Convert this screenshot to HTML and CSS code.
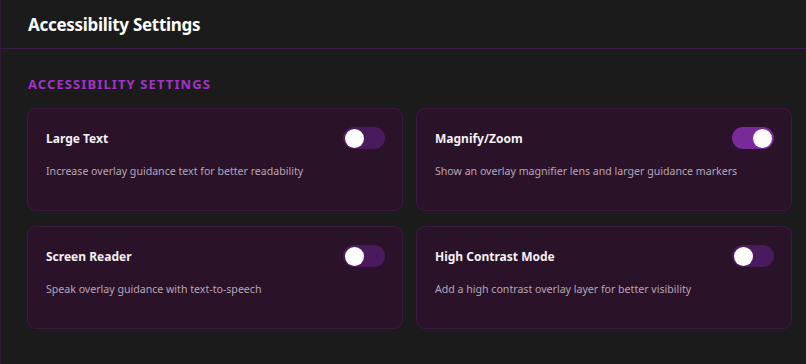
FILE: index.html
```html
<!DOCTYPE html>
<html lang="en">
<head>
  <meta charset="UTF-8" />
  <title>Accessibility Settings</title>
  <link rel="stylesheet" href="styles.css">
</head>
<body>
  <div class="panel">
    <header class="panel-header">
      <h1>Accessibility Settings</h1>
    </header>

    <section class="panel-body">
      <h2 class="section-title">Accessibility Settings</h2>

      <div class="settings-grid">
        <div class="setting-card">
          <div class="setting-top">
            <span class="setting-name">Large Text</span>
            <span class="toggle"><span class="knob"></span></span>
          </div>
          <p class="setting-desc">Increase overlay guidance text for better readability</p>
        </div>

        <div class="setting-card">
          <div class="setting-top">
            <span class="setting-name">Magnify/Zoom</span>
            <span class="toggle on"><span class="knob"></span></span>
          </div>
          <p class="setting-desc">Show an overlay magnifier lens and larger guidance markers</p>
        </div>

        <div class="setting-card">
          <div class="setting-top">
            <span class="setting-name">Screen Reader</span>
            <span class="toggle"><span class="knob"></span></span>
          </div>
          <p class="setting-desc">Speak overlay guidance with text-to-speech</p>
        </div>

        <div class="setting-card">
          <div class="setting-top">
            <span class="setting-name">High Contrast Mode</span>
            <span class="toggle"><span class="knob"></span></span>
          </div>
          <p class="setting-desc">Add a high contrast overlay layer for better visibility</p>
        </div>
      </div>
    </section>
  </div>
</body>
</html>
```

FILE: styles.css
```css
html, body {
  margin: 0;
  height: 100%;
}

body {
  background: #1c1b1c;
  font-family: "Noto Sans", "Open Sans", sans-serif;
  color: #fff;
}

.panel {
  height: 100%;
  border-left: 1px solid #2b1c31;
}

.panel-header {
  height: 48px;
  border-bottom: 1px solid #3a1d44;
  padding: 0 27px;
  display: flex;
  align-items: center;
}

.panel-header h1 {
  margin: 0;
  font-size: 17px;
  font-weight: 700;
  letter-spacing: -0.3px;
}

.panel-body {
  padding: 26px 13px 0 26px;
}

.section-title {
  margin: 0 0 15px 1px;
  font-size: 13px;
  font-weight: 700;
  letter-spacing: 1.1px;
  text-transform: uppercase;
  color: #a232c9;
}

.settings-grid {
  display: grid;
  grid-template-columns: 376px 376px;
  column-gap: 13px;
  row-gap: 15px;
}

.setting-card {
  height: 103px;
  box-sizing: border-box;
  background: #2a1229;
  border: 1px solid #3b1a40;
  border-radius: 9px;
  padding: 18px 17px 0 18px;
}

.setting-top {
  display: flex;
  justify-content: space-between;
  align-items: center;
}

.setting-name {
  font-size: 12px;
  font-weight: 700;
  color: #f4f0f4;
}

.setting-desc {
  margin: 15px 0 0;
  font-size: 10.6px;
  color: #b6a7b7;
}

.toggle {
  width: 42px;
  height: 22px;
  border-radius: 11px;
  background: #4a1a5e;
  display: flex;
  align-items: center;
  padding: 0 2px;
  box-sizing: border-box;
}

.toggle.on {
  background: #7a2a98;
  justify-content: flex-end;
}

.knob {
  width: 19px;
  height: 19px;
  border-radius: 50%;
  background: #fff;
}
```
